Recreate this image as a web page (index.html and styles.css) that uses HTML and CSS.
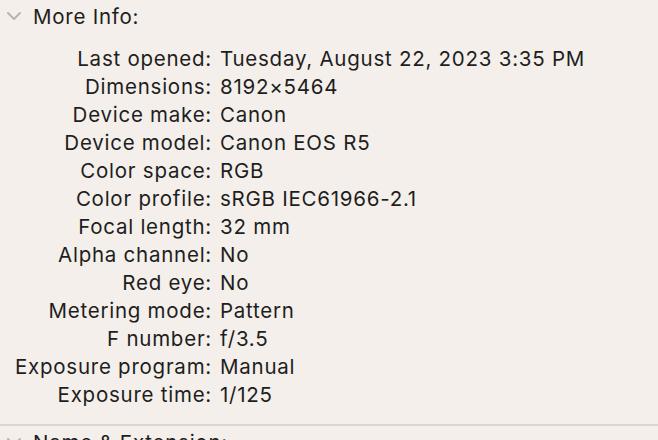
FILE: index.html
```html
<!DOCTYPE html>
<html>
<head>
<meta charset="utf-8">
<link rel="stylesheet" href="styles.css">
</head>
<body>
<section class="section">
  <div class="section-head">
    <svg class="chev" width="16" height="10" viewBox="0 0 16 10"><path d="M2 2 L8 8 L14 2" fill="none" stroke="#b9b4af" stroke-width="2" stroke-linecap="round" stroke-linejoin="round"/></svg>
    <span class="title">More Info:</span>
  </div>
  <div class="info">
    <div class="lbl">Last opened:</div><div class="val">Tuesday, August 22, 2023 3:35 PM</div>
    <div class="lbl">Dimensions:</div><div class="val">8192×5464</div>
    <div class="lbl">Device make:</div><div class="val">Canon</div>
    <div class="lbl">Device model:</div><div class="val">Canon EOS R5</div>
    <div class="lbl">Color space:</div><div class="val">RGB</div>
    <div class="lbl">Color profile:</div><div class="val">sRGB IEC61966-2.1</div>
    <div class="lbl">Focal length:</div><div class="val">32 mm</div>
    <div class="lbl">Alpha channel:</div><div class="val">No</div>
    <div class="lbl">Red eye:</div><div class="val">No</div>
    <div class="lbl">Metering mode:</div><div class="val">Pattern</div>
    <div class="lbl">F number:</div><div class="val">f/3.5</div>
    <div class="lbl">Exposure program:</div><div class="val">Manual</div>
    <div class="lbl">Exposure time:</div><div class="val">1/125</div>
  </div>
</section>
<div class="sep"></div>
<section class="section">
  <div class="section-head">
    <svg class="chev" width="16" height="10" viewBox="0 0 16 10"><path d="M2 2 L8 8 L14 2" fill="none" stroke="#b9b4af" stroke-width="2" stroke-linecap="round" stroke-linejoin="round"/></svg>
    <span class="title">Name &amp; Extension:</span>
  </div>
</section>
</body>
</html>
```
FILE: styles.css
```css
html, body {
  margin: 0;
  padding: 0;
  background: #f4efea;
  overflow: hidden;
}
body {
  font-family: Inter, "Liberation Sans", sans-serif;
  font-size: 20.5px;
  letter-spacing: 0.75px;
  color: #1e1e1e;
  width: 658px;
  height: 440px;
}
.section {
  padding-top: 2px;
}
.section-head {
  display: flex;
  align-items: center;
  height: 28px;
  gap: 11px;
  padding-left: 6px;
}
.chev {
  display: block;
}
.info {
  display: grid;
  grid-template-columns: 212px auto;
  column-gap: 8px;
  grid-auto-rows: 28px;
  align-items: center;
  margin-top: 14px;
  padding-bottom: 16px;
}
.lbl {
  text-align: right;
  white-space: nowrap;
}
.val {
  white-space: nowrap;
}
.sep {
  height: 2px;
  background: #dcd6d1;
}
```
